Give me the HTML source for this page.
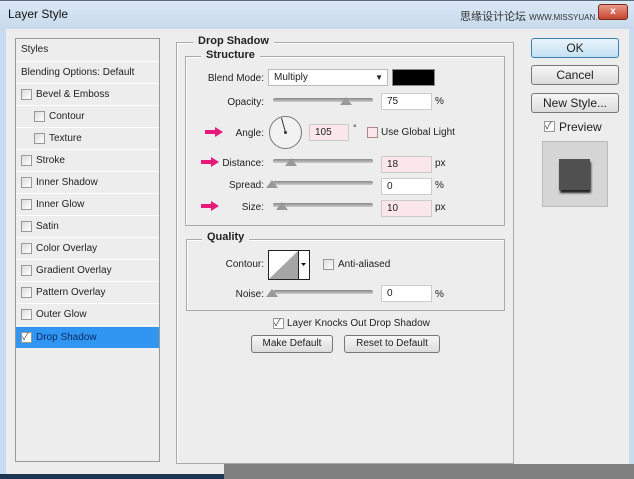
<!DOCTYPE html>
<html><head><meta charset="utf-8"><style>
*{margin:0;padding:0;box-sizing:border-box}
body{width:634px;height:479px;overflow:hidden;background:#c8dcef;font-family:"Liberation Sans","Noto Sans CJK SC",sans-serif;font-size:10px;color:#222;position:relative}
.a{position:absolute}
.title{left:0;top:0;width:634px;height:30px;background:linear-gradient(#dbe8f5,#c6d9ec);border-top:1px solid #5a6d80}
.body{left:6px;top:29px;width:623px;height:445px;background:#ededed}
.panel{left:15px;top:38px;width:145px;height:424px;border:1px solid #999;background:#ededed}
.row{position:absolute;left:0;width:143px;height:22px;border-bottom:1px solid #fff;line-height:21px}
.cb{position:absolute;width:11px;height:11px;border:1px solid #999;background:linear-gradient(135deg,#ddd,#fff)}
.gb{border:1px solid #aaa;box-shadow:1px 1px 0 #fff inset}
.lbl{position:absolute;background:#ededed;padding:0 5px;font-weight:bold;font-size:11px}
.inp{position:absolute;height:17px;background:#fff;border:1px solid #ccc;padding-left:5px;line-height:16px}
.pink{background:#fbe6ea}
.sl{position:absolute;height:4px;background:linear-gradient(#888,#ccc);border-radius:2px;width:100px}
.th{position:absolute;width:0;height:0;border-left:6px solid transparent;border-right:6px solid transparent;border-bottom:8px solid #999}
.arrow{position:absolute;width:18px;height:10px}
.btn{position:absolute;border:1px solid #777;border-radius:3px;background:linear-gradient(#f6f6f6,#dcdcdc);text-align:center}
.r{text-align:right}
</style></head><body>
<div class="a title"></div>
<div class="a" style="left:8px;top:7px;font-size:12px;color:#111">Layer Style</div>
<div class="a" style="left:460px;top:8px;font-size:11px;color:#333;white-space:nowrap">思缘设计论坛 <span style="font-size:8px">WWW.MISSYUAN.COM</span></div>
<div class="a" style="left:598px;top:4px;width:30px;height:16px;background:linear-gradient(#e89a8a,#c5442f);border:1px solid #7a2a20;border-radius:3px;color:#fff;text-align:center;font-weight:bold;line-height:14px">x</div>
<div class="a body"></div>
<div class="a panel">
 <div class="row" style="top:0;height:23px;padding-left:5px">Styles</div>
 <div class="row" style="top:23px;padding-left:5px">Blending Options: Default</div>
 <div class="row" style="top:45px"><span class="cb" style="left:5px;top:5px"></span><span style="position:absolute;left:20px">Bevel &amp; Emboss</span></div>
 <div class="row" style="top:67px"><span class="cb" style="left:18px;top:5px"></span><span style="position:absolute;left:33px">Contour</span></div>
 <div class="row" style="top:89px"><span class="cb" style="left:18px;top:5px"></span><span style="position:absolute;left:33px">Texture</span></div>
 <div class="row" style="top:111px"><span class="cb" style="left:5px;top:5px"></span><span style="position:absolute;left:20px">Stroke</span></div>
 <div class="row" style="top:133px"><span class="cb" style="left:5px;top:5px"></span><span style="position:absolute;left:20px">Inner Shadow</span></div>
 <div class="row" style="top:155px"><span class="cb" style="left:5px;top:5px"></span><span style="position:absolute;left:20px">Inner Glow</span></div>
 <div class="row" style="top:177px"><span class="cb" style="left:5px;top:5px"></span><span style="position:absolute;left:20px">Satin</span></div>
 <div class="row" style="top:199px"><span class="cb" style="left:5px;top:5px"></span><span style="position:absolute;left:20px">Color Overlay</span></div>
 <div class="row" style="top:221px"><span class="cb" style="left:5px;top:5px"></span><span style="position:absolute;left:20px">Gradient Overlay</span></div>
 <div class="row" style="top:243px"><span class="cb" style="left:5px;top:5px"></span><span style="position:absolute;left:20px">Pattern Overlay</span></div>
 <div class="row" style="top:265px"><span class="cb" style="left:5px;top:5px"></span><span style="position:absolute;left:20px">Outer Glow</span></div>
 <div class="row" style="top:288px;height:21px;background:#3196f2;border:none;color:#0b2a6b"><span class="cb" style="left:5px;top:5px;background:#fff;color:#556;font-size:10px;line-height:9px">✓</span><span style="position:absolute;left:20px">Drop Shadow</span></div>
</div>

<div class="a gb" style="left:176px;top:42px;width:338px;height:422px"></div>
<div class="lbl" style="left:193px;top:35px">Drop Shadow</div>
<div class="a gb" style="left:185px;top:56px;width:320px;height:170px"></div>
<div class="lbl" style="left:201px;top:49px">Structure</div>

<div class="a r" style="left:200px;top:73px;width:64px">Blend Mode:</div>
<div class="inp" style="left:268px;top:69px;width:120px;border-color:#bbb">Multiply<span style="position:absolute;right:4px;top:0;font-size:8px">▼</span></div>
<div class="a" style="left:392px;top:69px;width:43px;height:17px;background:#000;border:1px solid #888"></div>

<div class="a r" style="left:200px;top:97px;width:64px">Opacity:</div>
<div class="sl" style="left:273px;top:98px"></div><div class="th" style="left:340px;top:97px"></div>
<div class="inp" style="left:381px;top:93px;width:51px">75</div><div class="a" style="left:435px;top:96px">%</div>

<svg class="arrow" style="left:205px;top:127px" viewBox="0 0 18 10"><path d="M0 3h10V0l8 5-8 5V7H0z" fill="#e8197a"/></svg>
<div class="a r" style="left:200px;top:128px;width:64px">Angle:</div>
<svg class="a" style="left:268px;top:115px" width="35" height="35"><circle cx="17.5" cy="17.5" r="16" fill="#f2f2f2" stroke="#777"/><line x1="17.5" y1="17.5" x2="13.5" y2="3" stroke="#333"/><circle cx="17.5" cy="17.5" r="1.5" fill="#333"/></svg>
<div class="inp pink" style="left:309px;top:124px;width:40px">105</div>
<div class="a" style="left:353px;top:123px;font-size:9px">°</div>
<span class="cb" style="left:367px;top:127px;background:#fbe6ea;border-color:#a88"></span>
<div class="a" style="left:381px;top:127px">Use Global Light</div>

<svg class="arrow" style="left:201px;top:157px" viewBox="0 0 18 10"><path d="M0 3h10V0l8 5-8 5V7H0z" fill="#e8197a"/></svg>
<div class="a r" style="left:200px;top:158px;width:64px">Distance:</div>
<div class="sl" style="left:273px;top:159px"></div><div class="th" style="left:285px;top:158px"></div>
<div class="inp pink" style="left:381px;top:156px;width:51px">18</div><div class="a" style="left:435px;top:158px">px</div>

<div class="a r" style="left:200px;top:180px;width:64px">Spread:</div>
<div class="sl" style="left:273px;top:181px"></div><div class="th" style="left:266px;top:180px"></div>
<div class="inp" style="left:381px;top:178px;width:51px">0</div><div class="a" style="left:435px;top:180px">%</div>

<svg class="arrow" style="left:201px;top:201px" viewBox="0 0 18 10"><path d="M0 3h10V0l8 5-8 5V7H0z" fill="#e8197a"/></svg>
<div class="a r" style="left:200px;top:202px;width:64px">Size:</div>
<div class="sl" style="left:273px;top:203px"></div><div class="th" style="left:276px;top:202px"></div>
<div class="inp pink" style="left:381px;top:200px;width:51px">10</div><div class="a" style="left:435px;top:202px">px</div>

<div class="a gb" style="left:186px;top:239px;width:319px;height:72px"></div>
<div class="lbl" style="left:202px;top:231px">Quality</div>
<div class="a r" style="left:200px;top:259px;width:64px">Contour:</div>
<svg class="a" style="left:268px;top:250px" width="42" height="30"><rect x="0.5" y="0.5" width="41" height="29" fill="#fff" stroke="#222"/><path d="M1 29L30 1V29z" fill="#a5a5a5"/><line x1="30.5" y1="0" x2="30.5" y2="30" stroke="#222"/><path d="M33 13h5l-2.5 3z" fill="#111"/></svg>
<span class="cb" style="left:323px;top:259px"></span>
<div class="a" style="left:338px;top:259px">Anti-aliased</div>
<div class="a r" style="left:200px;top:289px;width:64px">Noise:</div>
<div class="sl" style="left:273px;top:290px"></div><div class="th" style="left:266px;top:289px"></div>
<div class="inp" style="left:381px;top:285px;width:51px">0</div><div class="a" style="left:435px;top:289px">%</div>

<span class="cb" style="left:273px;top:318px;background:#fff;color:#446;font-size:10px;line-height:9px">✓</span>
<div class="a" style="left:287px;top:318px">Layer Knocks Out Drop Shadow</div>
<div class="btn" style="left:251px;top:335px;width:82px;height:18px;line-height:16px">Make Default</div>
<div class="btn" style="left:344px;top:335px;width:96px;height:18px;line-height:16px">Reset to Default</div>

<div class="btn" style="left:531px;top:38px;width:88px;height:20px;line-height:18px;font-size:12px;border-color:#3c7fb1;background:linear-gradient(#e9f4fb,#c3e1f3)">OK</div>
<div class="btn" style="left:531px;top:65px;width:88px;height:20px;line-height:18px;font-size:12px">Cancel</div>
<div class="btn" style="left:531px;top:93px;width:88px;height:20px;line-height:18px;font-size:12px">New Style...</div>
<span class="cb" style="left:544px;top:121px;background:#fff;color:#446;font-size:10px;line-height:9px">✓</span>
<div class="a" style="left:559px;top:120px;font-size:12px">Preview</div>
<div class="a" style="left:542px;top:141px;width:66px;height:66px;background:#d6d6d6;border:1px solid #bbb"></div>
<div class="a" style="left:559px;top:159px;width:31px;height:31px;background:#505050;box-shadow:1px 3px 2px #222"></div>

<div class="a" style="left:0;top:474px;width:224px;height:5px;background:#1c3550"></div>
<div class="a" style="left:224px;top:464px;width:410px;height:15px;background:#808080"></div>
</body></html>
